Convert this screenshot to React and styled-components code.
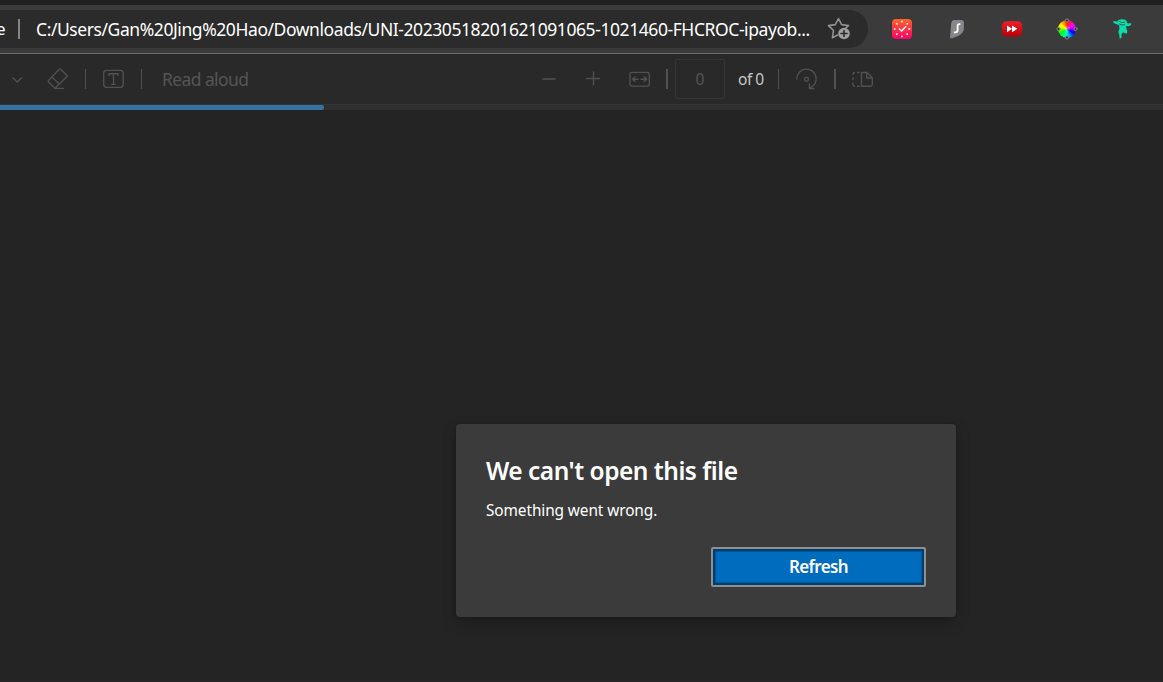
import React from 'react';
import styled, { createGlobalStyle } from 'styled-components';

const GlobalStyle = createGlobalStyle`
  * { box-sizing: border-box; }
  body { margin: 0; background: #242424; overflow: hidden; }
`;

const Window = styled.div`
  height: 682px;
  width: 1163px;
  display: flex;
  flex-direction: column;
  overflow: hidden;
  background: #242424;
  font-family: 'Noto Sans', 'Open Sans', sans-serif;
  color: #fff;
`;

const TitleStrip = styled.div`
  height: 5px;
  flex: none;
  background: #202020;
`;

const BrowserBar = styled.header`
  height: 49px;
  flex: none;
  display: flex;
  align-items: flex-start;
  padding-top: 5px;
  background: #3b3b3b;
  border-bottom: 1px solid #6b6b6b;
`;

const AddressField = styled.div`
  width: 868px;
  height: 38px;
  flex: none;
  display: flex;
  align-items: center;
  background: #2b2b2b;
  border-radius: 0 19px 19px 0;
`;

const Scheme = styled.span`
  width: 18px;
  margin-left: -4px;
  font-size: 17px;
  line-height: 38px;
`;

const Url = styled.span`
  width: 791px;
  margin-left: 16px;
  font-size: 17.5px;
  line-height: 36px;
  letter-spacing: -0.425px;
  white-space: nowrap;
`;

const Divider = styled.span`
  width: ${(p) => p.$width || 1}px;
  height: 20px;
  flex: none;
  margin-left: ${(p) => p.$gap || 0}px;
  background: ${(p) => p.$color || '#525252'};
`;

const Icon = styled.svg`
  display: block;
  flex: none;
  margin-left: ${(p) => p.$gap || 0}px;
  fill: none;
  stroke: ${(p) => p.$stroke || '#515151'};
  stroke-width: 1.35;
  stroke-linecap: round;
  stroke-linejoin: round;
`;

const Extensions = styled.div`
  height: 38px;
  display: flex;
  align-items: center;
  padding-left: 23px;
  gap: 33px;
`;

const ColorWheel = styled.span`
  width: 18px;
  height: 18px;
  margin: 0 2px;
  border-radius: 50%;
  background: radial-gradient(circle, rgba(255, 255, 255, 0.35), transparent 30%),
    conic-gradient(#f20, #f0f 60deg, #a0f 85deg, #00f 120deg, #0af 160deg, #0fb 190deg, #0f0 240deg, #8f0 265deg, #ff0 300deg, #f80 335deg, #f20);
  display: flex;
  align-items: center;
  justify-content: center;
`;

const PdfToolbar = styled.nav`
  height: 51px;
  flex: none;
  display: flex;
  align-items: center;
  background: #292929;
  border-bottom: 1px solid #353535;
`;

const ToolGroup = styled.div`
  display: flex;
  align-items: center;
  height: 50px;
  width: ${(p) => p.$width || 'auto'};
`;

const ReadAloud = styled.span`
  margin-left: 20px;
  font-size: 17.5px;
  line-height: 50px;
  letter-spacing: -0.6px;
  color: #555;
  white-space: nowrap;
`;

const PageInput = styled.div`
  width: 50px;
  height: 40px;
  flex: none;
  margin-left: 7px;
  border: 1px solid #363636;
  border-radius: 2px;
  color: #555;
  font-size: 15.5px;
  line-height: 39px;
  text-align: center;
`;

const PageCount = styled.span`
  width: 27px;
  margin-left: 13px;
  font-size: 15.5px;
  letter-spacing: -0.5px;
  color: #c8c8c8;
  white-space: nowrap;
`;

const ProgressTrack = styled.div`
  height: 5px;
  flex: none;
  background: #2f2f2f;
`;

const ProgressFill = styled.div`
  width: 324px;
  height: 5px;
  border-radius: 0 2px 2px 0;
  background: #3672a2;
`;

const Viewer = styled.main`
  flex: 1;
  padding: 314px 0 0 456px;
  background: #242424;
  border-bottom: 1px solid #2a2627;
`;

const Dialog = styled.section`
  width: 500px;
  height: 193px;
  display: flex;
  flex-direction: column;
  padding: 28px 30px 30px;
  background: #3b3b3b;
  border-radius: 4px;
  box-shadow: 0 5px 14px rgba(0, 0, 0, 0.25), 0 0 3px rgba(0, 0, 0, 0.22);
`;

const Title = styled.h1`
  margin: 0;
  font-size: 24.5px;
  line-height: 38px;
  font-weight: 600;
  letter-spacing: -0.5px;
  white-space: nowrap;
`;

const Message = styled.p`
  margin: 10px 0 0;
  font-size: 15.4px;
  line-height: 22px;
  letter-spacing: -0.1px;
`;

const RefreshButton = styled.button`
  width: 215px;
  height: 40px;
  margin-top: auto;
  align-self: flex-end;
  padding: 0;
  border: 2px solid #8f8f8f;
  border-radius: 2px;
  background: #006cbe;
  box-shadow: inset 0 0 0 2px #003e6d, inset 0 0 0 3px #00569a;
  color: #fff;
  font: 600 17px/34px 'Noto Sans', 'Open Sans', sans-serif;
  letter-spacing: -0.6px;
`;

function FavoriteIcon() {
  return (
    <Icon width="24" height="24" viewBox="0 0 24 24" $stroke="#919191">
      <path strokeWidth="1.6" d="M10.6 18 5.4 20.8l1.1-7.3L1.5 8.6l6.8-1L11.5 1.5l3.1 6.1 6.9 1-2.5 2.2" />
      <circle cx="17" cy="16.5" r="5.8" fill="#a0a0a0" stroke="none" />
      <path stroke="#2b2b2b" strokeWidth="1.6" d="M17 13.5v6M14 16.5h6" />
    </Icon>
  );
}

function ClockExtension() {
  const ticks = Array.from({ length: 8 }, (_, i) => i * 45);
  return (
    <Icon width="22" height="22" viewBox="0 0 22 22" $stroke="#fff">
      <defs>
        <linearGradient id="clock" x1="0" y1="0" x2="0" y2="1">
          <stop stopColor="#ff6628" />
          <stop offset="1" stopColor="#fc0067" />
        </linearGradient>
      </defs>
      <rect x="1" y="1" width="20" height="20" rx="4" fill="url(#clock)" stroke="none" />
      {ticks.map((a) => (
        <path key={a} strokeWidth="1.5" strokeLinecap="butt" d="M11 2.8v1.8" transform={`rotate(${a} 11 11)`} />
      ))}
      <path strokeWidth="1.5" d="m8.4 11 2.2 2 4-4.2" />
    </Icon>
  );
}

function ShieldExtension() {
  return (
    <Icon width="22" height="22" viewBox="0 0 22 22" $stroke="#fff">
      <path fill="#87878b" stroke="none" d="M8.5 2h6.8c1.4 0 2.6.9 2.6 2.3v5.8c0 5.4-5.1 8.5-11.8 10.1-1.5.4-2.2-.1-2-1.8L5.2 6C5.6 3.4 6.3 2 8.5 2Z" />
      <path strokeWidth="1.8" strokeLinecap="butt" d="M14.4 6.1h-1.1c-1.1 0-1.7.5-1.7 1.6v4.6c0 1.4-.8 2-2.2 2H7.8" />
    </Icon>
  );
}

function SpeedExtension() {
  return (
    <Icon width="22" height="22" viewBox="0 0 22 22">
      <defs>
        <linearGradient id="speed" x1="0" y1="0" x2="0" y2="1">
          <stop stopColor="#ef2028" />
          <stop offset="1" stopColor="#b50008" />
        </linearGradient>
      </defs>
      <path fill="url(#speed)" stroke="none" d="M4 3.4q7-1 14 0 2.7.3 2.9 3 .5 4.4 0 8.7-.2 2.9-3 3.2-7 .8-13.7 0-2.8-.3-3-3.2-.5-4.3 0-8.7.2-2.7 2.8-3Z" />
      <path fill="#fff" stroke="none" d="m6 7.6 5 3.2-5 3.4Zm5 0 5.4 3.2-5.4 3.4Z" />
    </Icon>
  );
}

function ColorExtension() {
  return (
    <ColorWheel>
      <Icon width="22" height="22" viewBox="0 0 22 22" $stroke="#858585">
        <g fill="#333" strokeWidth="1">
          <circle cx="11" cy="2.5" r="1.6" />
          <circle cx="2.5" cy="11" r="1.6" />
          <circle cx="19.5" cy="11" r="1.6" />
          <circle cx="11" cy="19.5" r="1.6" />
        </g>
      </Icon>
    </ColorWheel>
  );
}

function NinjaExtension() {
  return (
    <Icon width="22" height="22" viewBox="0 0 22 22">
      <path fill="#08deac" stroke="none" d="m2.2 3 4.1.6 1.2-1.6 2.8-.8 3.4.2 2 1.6.2 2 2.2.6 2.1-.5-.2 2-2.4 1.1-2.6-.1.3 2.1.9 2.2-.2 3.2-2.3-.3-1.8-1.1-1.3 2-.2 3.7-1.7.9-.6-5.1-.8-1.7 1.1-3-.3-3.7L5.2 5.9 2.6 5Z" />
      <path stroke="#3b3b3b" strokeWidth="0.8" d="m8.1 3.3 2.6 1.2 2.8-.2M8.4 6l2.1.9 3-.2" />
    </Icon>
  );
}

function ToolbarIcons() {
  return (
    <>
      <ToolGroup $width="542px">
        <Icon width="10" height="10" viewBox="0 0 10 10" $gap={12}>
          <path d="m1 4 4.3 4L9.5 4" />
        </Icon>
        <Icon width="22" height="22" viewBox="0 0 22 22" $gap={25}>
          <path d="m13.5 1.2 6.3 6.1q.6.7 0 1.4L8.7 19.5q-.8.7-1.6 0L1.6 14q-.8-.8 0-1.6L12.3 1.2q.6-.6 1.2 0ZM5.2 9.4l7.2 6.7M7.5 20.4h9" />
        </Icon>
        <Divider $gap={16} />
        <Icon width="22" height="20" viewBox="0 0 22 20" $gap={17}>
          <rect x="0.7" y="1.3" width="19.5" height="17" rx="3" />
          <path d="M5.9 7V4.7h9.2V7M10.5 4.7v10.6M8.3 15.3h4.4" strokeLinecap="butt" />
        </Icon>
        <Divider $gap={16} />
        <ReadAloud>Read aloud</ReadAloud>
      </ToolGroup>
      <ToolGroup>
        <Icon width="14" height="14" viewBox="0 0 14 14">
          <path d="M1 7h12" strokeWidth="1.6" />
        </Icon>
        <Icon width="16" height="16" viewBox="0 0 16 16" $gap={29}>
          <path d="M1.5 7.5h13M8.5 1v13" />
        </Icon>
        <Icon width="22" height="18" viewBox="0 0 22 18" $gap={28}>
          <rect x="1" y="2.4" width="19.3" height="13.7" rx="2" />
          <path d="M9 9.2H3.5m2.6-2.4L3.5 9.2l2.6 2.4M12 9.2h5.7m-2.6-2.4 2.6 2.4-2.6 2.4" />
        </Icon>
        <Divider $width={2} $gap={15} />
        <PageInput>0</PageInput>
        <PageCount>of 0</PageCount>
        <Divider $gap={13} />
        <Icon width="22" height="22" viewBox="0 0 22 22" $gap={17}>
          <path d="M.8 11A9.7 9.7 0 1 1 13.6 20M13.4 16V20.6h4.6" />
          <circle cx="10.5" cy="11.2" r="1.9" />
        </Icon>
        <Divider $width={2} $gap={16} />
        <Icon width="22" height="18" viewBox="0 0 22 18" $gap={16}>
          <path d="M9.5 2.5v13.7h9q1.8 0 1.8-1.8V7.7L15 2.5ZM14.6 2.5V8h5.6" />
          <path strokeLinecap="butt" d="M7.7 2.5H5M3 2.5q-2 0-2 2v.6m0 2.2v3m0 2.2v1.7q0 2 2 2M5 16.2h2.7" />
        </Icon>
      </ToolGroup>
    </>
  );
}

export default function App() {
  return (
    <>
      <GlobalStyle />
      <Window>
        <TitleStrip />
        <BrowserBar>
          <AddressField>
            <Scheme>e</Scheme>
            <Divider $width={2} $gap={4} $color="#858585" />
            <Url>
              C:/Users/Gan%20Jing%20Hao/Downloads/UNI-20230518201621091065-1021460-FHCROC-ipayob...
            </Url>
            <FavoriteIcon />
          </AddressField>
          <Extensions>
            <ClockExtension />
            <ShieldExtension />
            <SpeedExtension />
            <ColorExtension />
            <NinjaExtension />
          </Extensions>
        </BrowserBar>
        <PdfToolbar>
          <ToolbarIcons />
        </PdfToolbar>
        <ProgressTrack>
          <ProgressFill />
        </ProgressTrack>
        <Viewer>
          <Dialog role="dialog">
            <Title>We can't open this file</Title>
            <Message>Something went wrong.</Message>
            <RefreshButton>Refresh</RefreshButton>
          </Dialog>
        </Viewer>
      </Window>
    </>
  );
}
